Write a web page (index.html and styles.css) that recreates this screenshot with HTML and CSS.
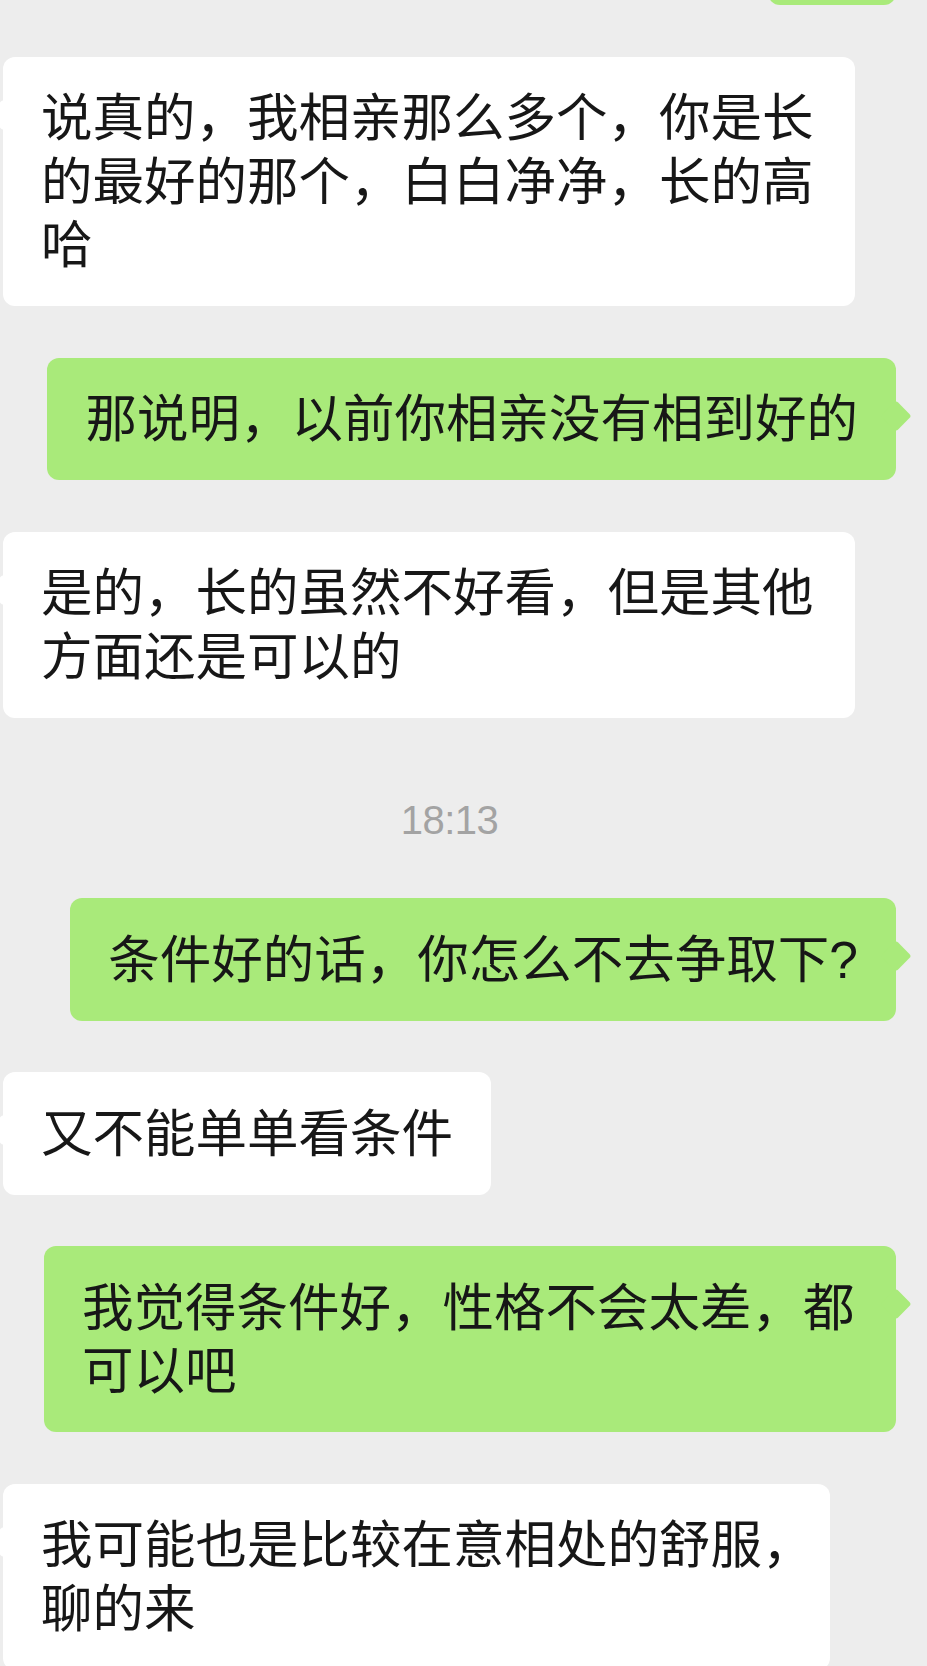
FILE: index.html
```html
<!DOCTYPE html>
<html lang="zh-CN">
<head>
    <meta charset="UTF-8">
    <meta name="viewport" content="width=device-width, initial-scale=1.0">
    <title>聊天记录</title>
    <link rel="stylesheet" href="styles.css">
</head>
<body>
    <div class="chat">
        <div class="row out"><div class="bubble">嗯</div></div>

        <div class="row in">
            <div class="bubble">说真的，我相亲那么多个，你是长的最好的那个，白白净净，长的高哈</div>
        </div>

        <div class="row out">
            <div class="bubble">那说明，以前你相亲没有相到好的</div>
        </div>

        <div class="row in">
            <div class="bubble">是的，长的虽然不好看，但是其他方面还是可以的</div>
        </div>

        <div class="time">18:13</div>

        <div class="row out">
            <div class="bubble">条件好的话，你怎么不去争取下?</div>
        </div>

        <div class="row in">
            <div class="bubble">又不能单单看条件</div>
        </div>

        <div class="row out">
            <div class="bubble">我觉得条件好，性格不会太差，都可以吧</div>
        </div>

        <div class="row in">
            <div class="bubble">我可能也是比较在意相处的舒服<span class="punct">，</span><br>聊的来</div>
        </div>
    </div>
</body>
</html>
```

FILE: styles.css
```css
html, body {
    margin: 0;
    padding: 0;
    overflow: hidden;
    background: #ededed;
    font-family: "Liberation Sans", "Noto Sans CJK SC", sans-serif;
}

/* Message list (scrolled, so the first bubble is cut off) */
.chat {
    display: flex;
    flex-direction: column;
    gap: 51.5px;
    margin: -117.5px 0 0 -28px;
}

.row {
    display: flex;
    padding: 0 31px;
}

.row.out {
    justify-content: flex-end;
}

/* Bubbles */
.bubble {
    position: relative;
    box-sizing: border-box;
    max-width: 852px;
    padding: 30.5px 38px 28.5px;
    border-radius: 12px;
    background: #fff;
    color: #171717;
    font-size: 51.5px;
    line-height: 63.5px;
}

.out .bubble {
    background: #a9ea7a;
}

/* little tail */
.bubble::after {
    content: "";
    position: absolute;
    top: 47px;
    width: 22px;
    height: 22px;
    background: inherit;
    border-radius: 3px;
    transform: rotate(45deg);
}

.in .bubble::after {
    left: -11px;
}

.out .bubble::after {
    right: -11px;
}

/* line-end comma is drawn half width */
.punct {
    letter-spacing: -0.42em;
}

/* Timestamp */
.time {
    margin: 28px 0 3.5px;
    text-align: center;
    font-size: 40px;
    line-height: 46px;
    letter-spacing: -0.5px;
    color: #a3a3a3;
}
```
